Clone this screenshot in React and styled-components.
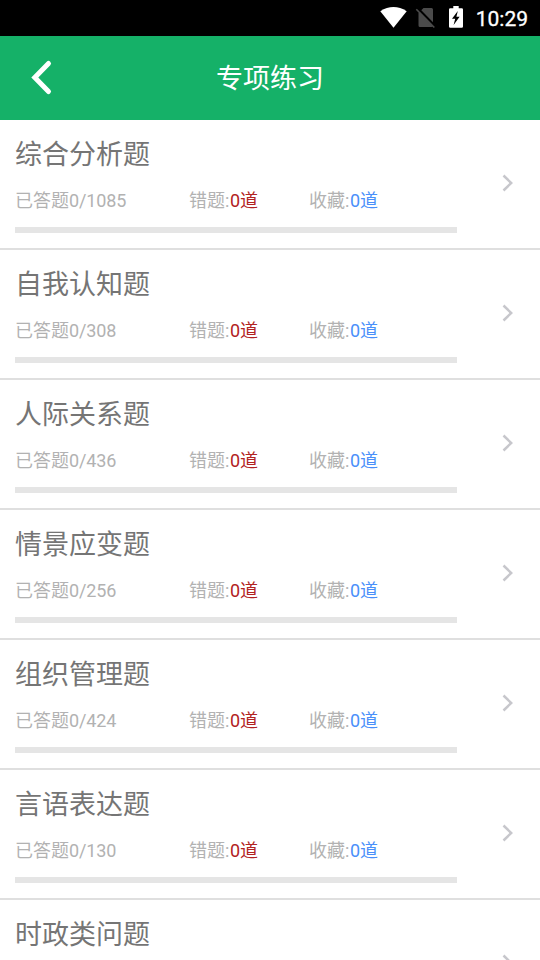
import React from "react";
import styled, { createGlobalStyle } from "styled-components";

const GlobalStyle = createGlobalStyle`
  * {
    box-sizing: border-box;
  }
  body {
    margin: 0;
    background-color: #fff;
    font-family: Roboto, "Noto Sans CJK SC", sans-serif;
  }
`;

const Screen = styled.div`
  display: flex;
  flex-direction: column;
  width: 540px;
  height: 960px;
  overflow: hidden;
  background-color: #fff;
`;

const StatusBar = styled.div`
  flex: none;
  display: flex;
  align-items: center;
  justify-content: flex-end;
  height: 36px;
  padding-right: 12px;
  background-color: #000;
  color: #fff;
`;

const StatusIcons = styled.svg`
  display: block;
  width: 84px;
  height: 36px;
  margin-right: 10px;
`;

const Clock = styled.span`
  width: 54px;
  font-size: 21px;
  font-weight: 400;
  line-height: 36px;
  padding-top: 1px;
  -webkit-text-stroke: 0.3px #fff;
  text-align: right;
`;

const Header = styled.header`
  flex: none;
  display: grid;
  grid-template-columns: 84px 1fr 84px;
  align-items: center;
  height: 84px;
  background-color: #15b168;
`;

const BackButton = styled.button`
  display: block;
  width: 84px;
  height: 84px;
  padding: 0;
  border: 0;
  background: none;
  cursor: pointer;

  svg {
    display: block;
  }
`;

const Title = styled.h1`
  margin: 0;
  padding-top: 2px;
  font-size: 27px;
  font-weight: 400;
  line-height: 40px;
  text-align: center;
  color: #fff;
`;

const List = styled.div`
  flex: 1;
  min-height: 0;
  overflow: hidden;
`;

const Row = styled.div`
  display: flex;
  justify-content: space-between;
  height: 130px;
  padding: 15px 20px 0 15px;
  border-bottom: 2px solid #dfdfdf;
`;

const RowBody = styled.div`
  width: 442px;
`;

const RowTitle = styled.h2`
  margin: 0;
  font-size: 27px;
  font-weight: 400;
  line-height: 40px;
  color: #757575;
`;

const Stats = styled.div`
  display: grid;
  grid-template-columns: 174px 120px 1fr;
  margin-top: 13px;
  font-size: 18px;
  line-height: 26px;
  color: #b2b2b2;
`;

const Amount = styled.span`
  letter-spacing: -0.15px;
`;

const Count = styled.span`
  margin-left: 0.6px;
  color: ${(props) => props.$color};
`;

const Progress = styled.div`
  height: 6px;
  margin-top: 13px;
  background-color: #e5e5e5;
`;

const ProgressFill = styled.div`
  height: 100%;
  background-color: #15b168;
`;

const Arrow = styled.svg`
  display: block;
  width: 24px;
  height: 24px;
  margin-top: 36px;
`;

const topics = [
  { name: "综合分析题", total: 1085 },
  { name: "自我认知题", total: 308 },
  { name: "人际关系题", total: 436 },
  { name: "情景应变题", total: 256 },
  { name: "组织管理题", total: 424 },
  { name: "言语表达题", total: 130 },
  { name: "时政类问题" },
];

function TopicRow({ name, total, done = 0, wrong = 0, saved = 0 }) {
  return (
    <Row>
      <RowBody>
        <RowTitle>{name}</RowTitle>
        {total && (
          <>
            <Stats>
              <span>
                已答题
                <Amount>
                  {done}/{total}
                </Amount>
              </span>
              <span>
                错题:<Count $color="#b22222">{wrong}道</Count>
              </span>
              <span>
                收藏:<Count $color="#4a90fa">{saved}道</Count>
              </span>
            </Stats>
            <Progress>
              <ProgressFill style={{ width: `${(done / total) * 100}%` }} />
            </Progress>
          </>
        )}
      </RowBody>
      <Arrow viewBox="0 0 24 24" fill="none">
        <path d="M7.500 4.500 15.200 12 7.500 19.500" stroke="#c7c7cc" strokeWidth="2.500" />
      </Arrow>
    </Row>
  );
}

function App() {
  return (
    <>
      <GlobalStyle />
      <Screen>
        <StatusBar>
          <StatusIcons viewBox="380 0 84 36">
            {/* wifi */}
            <path d="M380.300 11.200Q393.500 2.800 406.700 11.200L393.500 27.700Z" fill="#fff" />
            {/* no sim */}
            <path
              d="M423.500 8h8a1.500 1.500 0 0 1 1.500 1.500v16a1.500 1.500 0 0 1-1.500 1.500h-11.500a1.500 1.500 0 0 1-1.500-1.500V13Z"
              fill="#4b4b4b"
            />
            <path d="M417.500 8 435 26" stroke="#000" strokeWidth="2.500" />
            <path d="M416.300 9.200 434.300 27.500" stroke="#4b4b4b" strokeWidth="1.600" />
            {/* battery */}
            <path
              d="M453.300 6h5.400v2.200h3q1.300 0 1.300 1.300v17q0 1.300-1.300 1.300h-11.400q-1.300 0-1.300-1.300v-17q0-1.300 1.300-1.300h3Z"
              fill="#fff"
            />
            <path d="M457.800 11 452 18.800h3.200L453.600 25l6-8.200h-3.200Z" fill="#000" />
          </StatusIcons>
          <Clock>10:29</Clock>
        </StatusBar>
        <Header>
          <BackButton aria-label="返回">
            <svg width="84" height="84" viewBox="0 0 84 84" fill="none">
              <path
                d="M48.500 27.500 34.800 41.500 48.500 55.500"
                stroke="#fff"
                strokeWidth="5"
                strokeLinecap="round"
              />
            </svg>
          </BackButton>
          <Title>专项练习</Title>
        </Header>
        <List>
          {topics.map((topic) => (
            <TopicRow key={topic.name} {...topic} />
          ))}
        </List>
      </Screen>
    </>
  );
}

export default App;
